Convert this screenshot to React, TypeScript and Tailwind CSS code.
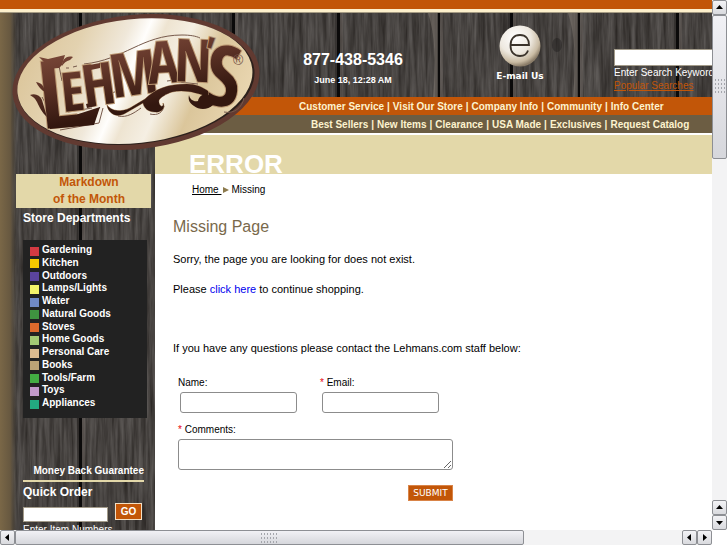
import { type ReactNode } from "react";

const departments = [
  { name: "Gardening", color: "bg-[#d43a42]" },
  { name: "Kitchen", color: "bg-[#f6c800]" },
  { name: "Outdoors", color: "bg-[#5b449c]" },
  { name: "Lamps/Lights", color: "bg-[#f4f36a]" },
  { name: "Water", color: "bg-[#7089c6]" },
  { name: "Natural Goods", color: "bg-[#3f9440]" },
  { name: "Stoves", color: "bg-[#dc6a2c]" },
  { name: "Home Goods", color: "bg-[#a3c974]" },
  { name: "Personal Care", color: "bg-[#dcbc90]" },
  { name: "Books", color: "bg-[#bba376]" },
  { name: "Tools/Farm", color: "bg-[#43ad43]" },
  { name: "Toys", color: "bg-[#c29aca]" },
  { name: "Appliances", color: "bg-[#23a981]" },
];

const serviceLinks = ["Customer Service", "Visit Our Store", "Company Info", "Community", "Info Center"];
const shopLinks = ["Best Sellers", "New Items", "Clearance", "USA Made", "Exclusives", "Request Catalog"];

const plankGaps = [80, 233, 338, 438, 511, 578, 677, 830, 935, 1035];

function WoodBackground() {
  return (
    <svg className="absolute inset-0 h-full w-full" aria-hidden="true">
      <defs>
        <filter id="grain" x="0" y="0" width="100%" height="100%" colorInterpolationFilters="sRGB">
          <feTurbulence type="fractalNoise" baseFrequency="0.28 0.018" numOctaves="4" seed="7" />
          <feColorMatrix values="0.26 0 0 0 0.145  0.26 0 0 0 0.13  0.26 0 0 0 0.12  0 0 0 0 1" />
        </filter>
        <linearGradient id="edge" x1="0" x2="1" y1="0" y2="0">
          <stop offset="0" stopColor="#7a6747" />
          <stop offset="0.6" stopColor="#675840" />
          <stop offset="1" stopColor="#4a443a" stopOpacity="0" />
        </linearGradient>
      </defs>
      <rect width="100%" height="100%" fill="#45403c" />
      <rect width="100%" height="100%" filter="url(#grain)" />
      {plankGaps.map((x) => (
        <g key={x}>
          <rect x={x - 3} width="2" height="100%" fill="#292725" opacity="0.6" />
          <rect x={x - 1} width="3" height="100%" fill="#0b0a0a" />
          <rect x={x + 2} width="3" height="100%" fill="#77716b" opacity="0.35" />
        </g>
      ))}
      <path d="M428 13q10 30 5 84h5V13z" fill="#847c74" opacity="0.5" />
      <path d="M568 13q10 30 5 84h5V13z" fill="#847c74" opacity="0.5" />
      <ellipse cx="557" cy="45" rx="5" ry="7" fill="#1c1a18" opacity="0.4" />
      <rect width="17" height="100%" fill="url(#edge)" />
    </svg>
  );
}

function Logo() {
  return (
    <svg viewBox="0 0 250 138" className="h-[138px] w-[250px]" role="img" aria-label="Lehman's">
      <defs>
        <linearGradient id="plate" x1="0" y1="0.35" x2="1" y2="0.65">
          <stop offset="0" stopColor="#dcc69b" />
          <stop offset="0.2" stopColor="#e3d2b0" />
          <stop offset="0.38" stopColor="#f0e8da" />
          <stop offset="0.46" stopColor="#fffefc" />
          <stop offset="0.53" stopColor="#eee4d1" />
          <stop offset="0.64" stopColor="#f5efe3" />
          <stop offset="0.78" stopColor="#dbc69b" />
          <stop offset="1" stopColor="#ead7b2" />
        </linearGradient>
        <linearGradient id="ink" gradientUnits="userSpaceOnUse" x1="0" y1="25" x2="20" y2="118">
          <stop offset="0" stopColor="#8b5645" />
          <stop offset="0.5" stopColor="#65382b" />
          <stop offset="1" stopColor="#33170f" />
        </linearGradient>
      </defs>
      <g transform="rotate(-6 124 69)">
        <ellipse cx="124" cy="69" rx="124" ry="67" fill="#613a31" />
        <ellipse cx="124" cy="69" rx="119" ry="62" fill="#2d211c" />
        <ellipse cx="123" cy="68" rx="118" ry="62" fill="url(#plate)" />
      </g>
      {/* engraved lines around the lettering */}
      <g fill="none" stroke="#76594b" strokeWidth="1">
        <path d="M72 51C112 47 130 22 170 22c8 0 14 1 18 3" />
        <path d="M54 55h3M61 54l4-1M56 99l24-4M50 104l34-5 4-5M48 117l39-7 4-15" />
        <path d="M100 80l10-4M106 103c9 2 16-3 23-8M138 101c8 2 13-2 14-8" />
        <path d="M155 68l8-1M166 69l20 2M212 99c10 2 18-4 20-14" />
        <path d="M30 84c5 8 6 16 7 24M46 48l4 20" />
      </g>
      <g
        fill="url(#ink)"
        stroke="#bd9a74"
        strokeWidth="2"
        paintOrder="stroke"
        className="font-['Open_Sans_Condensed','Roboto_Condensed',sans-serif] font-bold"
      >
        <text>
          <tspan x="30" y="116" fontSize="94" rotate="-6">L</tspan>
          <tspan x="51" y="99" fontSize="54" rotate="-6">E</tspan>
          <tspan x="73" y="94" fontSize="58" rotate="-8">H</tspan>
          <tspan x="101" y="85" fontSize="60" rotate="-8">M</tspan>
          <tspan x="137" y="71" fontSize="58" rotate="-4">A</tspan>
          <tspan x="162" y="68" fontSize="59" rotate="2">N</tspan>
          <tspan x="187" y="52" fontSize="42" rotate="16">'</tspan>
          <tspan x="191" y="91" fontSize="84" rotate="6">S</tspan>
        </text>
      </g>
      {/* serifs and swash */}
      <g fill="url(#ink)">
        <path d="M27 44l9 2 17-4-3 10-3 3-12 1-3-7zM36 107l3-2 12 1 37-12-6 18-44 4z" />
        <path d="M72 53l16-3v5l-14 3zM74 91l9-2 1 4-9 2z" />
        <path d="M95 92c5 7 15 7 23 3l15-9c10-10 23-15 42-15 9 0 15 3 21 7v6c-10-4-24-8-36-5-6 2-11 5-13 8-1 6 5 9 4 3 3 5-2 10-8 9-7 0-11-4-12-9l-19 11c-8 4-16-1-17-9z" stroke="#bd9a74" strokeWidth="1" paintOrder="stroke" />
        <path d="M177 82c1 5 5 7 9 6 1-6 8-9 12-5l3 9c-5 5-14 5-19 1-5-3-6-7-5-11z" />
        <path d="M18 82c5-2 10 0 12 5l5 17c-5-4-8-11-10-15-2-4-4-5-7-7zM24 69c6 1 8 4 9 10-4-2-7-6-9-10zM50 53c0-6 4-11 11-9l-3 3c-4 1-6 3-8 6z" />
      </g>
      <text x="221" y="52" fontSize="14" fill="#765348" className="font-['Liberation_Sans',sans-serif]">®</text>
    </svg>
  );
}

function EmailOrb() {
  return (
    <svg viewBox="0 0 42 42" className="h-[42px] w-[42px]" aria-hidden="true">
      <defs>
        <radialGradient id="orb" cx="0.38" cy="0.3" r="0.7">
          <stop offset="0" stopColor="#ffffff" />
          <stop offset="0.55" stopColor="#eee9e0" />
          <stop offset="0.85" stopColor="#c9bba3" />
          <stop offset="1" stopColor="#8b7d69" />
        </radialGradient>
      </defs>
      <circle cx="21" cy="21" r="20.500" fill="url(#orb)" />
      <path d="M12 20h18c0-6-3-10-9-10s-9.500 4-9.500 10.500S15 31 21 31c4 0 7-2 8-5.500" fill="none" stroke="#3b342c" strokeWidth="1.800" />
    </svg>
  );
}

function LinkBar({ links, className }: { links: string[]; className: string }) {
  return (
    <nav className={`flex h-[18px] items-center gap-[3px] whitespace-nowrap text-[10px] font-bold text-[#fdf3cf] ${className}`}>
      {links.map((l, i) => (
        <span key={l} className="flex gap-[3px]">
          {i > 0 ? <span>|</span> : null}
          <a href="#">{l}</a>
        </span>
      ))}
    </nav>
  );
}

const arrows = {
  up: "M4 9h7L7.500 5z",
  down: "M4 6h7l-3.500 4z",
  left: "M9 4v7L5 7.500z",
  right: "M6 4v7l4-3.500z",
};

function ArrowButton({ dir }: { dir: keyof typeof arrows }) {
  return (
    <button type="button" aria-label={`Scroll ${dir}`} className="h-[15px] w-[15px] shrink-0 rounded-xs border border-[#8d8f94] bg-linear-to-b from-[#f3f3f6] to-[#d9dade]">
      <svg viewBox="1 1 13 13" className="h-full w-full"><path d={arrows[dir]} fill="#000" /></svg>
    </button>
  );
}

function Grip({ children }: { children?: ReactNode }) {
  return (
    <div className="flex h-full w-full items-center justify-center rounded-xs border border-[#8d8f94] bg-linear-to-b from-[#f1f1f5] to-[#d6d7dc]">
      {children}
    </div>
  );
}

function GripDots({ className }: { className: string }) {
  return (
    <svg className={className} aria-hidden="true">
      <pattern id="dots" width="3" height="4" patternUnits="userSpaceOnUse"><rect width="1" height="2" fill="#a4a6ac" /></pattern>
      <rect width="100%" height="100%" fill="url(#dots)" />
    </svg>
  );
}

function Sidebar() {
  return (
    <aside className="relative w-[155px] shrink-0 pt-[161px] pl-4 font-bold text-white">
      <a href="#" className="mr-1 block bg-[#e3d8a9] pl-[11px] text-center text-[12px] leading-[17px] text-[#c25608]">
        Markdown<br />of the Month
      </a>
      <div className="mr-2 ml-[7px]">
        <h2 className="pt-[2px] text-[12px] leading-4">Store Departments</h2>
        <ul className="mt-[14px] flex h-[178px] flex-col justify-between bg-[#222] pt-1 pr-2 pb-[9px] pl-[7px] text-[10px] leading-3">
          {departments.map((d) => (
            <li key={d.name} className="flex h-3 items-center gap-[3px]">
              <span className={`mt-[2px] h-[9px] w-[9px] ${d.color}`} />
              <a href="#">{d.name}</a>
            </li>
          ))}
        </ul>
        <div className="mr-[3px] pt-[46px]">
          <a href="#" className="block border-b-2 border-[#e3d8a9] pb-[2px] text-right text-[10px] leading-[14px] whitespace-nowrap">Money Back Guarantee</a>
          <h2 className="mt-[2px] text-[12px] leading-4">Quick Order</h2>
          <div className="mt-[3px] flex items-start justify-between">
            <input id="items" className="mt-1 h-[15px] w-[85px] border border-[#a39b8a] bg-white px-1 text-[10px] text-black" />
            <button type="button" className="mr-[2px] h-[17px] w-[27px] border border-[#f3dfc3] bg-[#c25608] text-[10px] leading-[14px]">GO</button>
          </div>
          <label htmlFor="items" className="block text-[10px] font-normal whitespace-nowrap">Enter Item Numbers</label>
        </div>
      </div>
    </aside>
  );
}

function Header() {
  return (
    <header>
      <div className="flex h-[84px] pl-[146px] whitespace-nowrap text-white">
        <div className="w-[104px] shrink-0 pt-[37px] text-center font-bold">
          <p className="text-[16px] leading-5">877-438-5346</p>
          <p className="pt-1 text-[9px] leading-3">June 18, 12:28 AM</p>
        </div>
        <a href="#" className="ml-[88px] flex w-[54px] shrink-0 flex-col items-center pt-3 font-['DejaVu_Sans',sans-serif] text-[9px] leading-3 font-bold">
          <EmailOrb />
          <span className="mt-[3px]">E-mail Us</span>
        </a>
        <div className="ml-[67px] min-w-0 flex-1 pt-[36px] text-[10px] leading-[13px]">
          <input id="search" className="block h-[17px] w-[140px] border border-[#a39b8a] bg-white px-1 text-black" />
          <label htmlFor="search" className="block">Enter Search Keywords</label>
          <a href="#" className="text-[#c25608] underline">Popular Searches</a>
        </div>
      </div>
      <LinkBar links={serviceLinks} className="bg-[#c25608] pl-36" />
      <LinkBar links={shopLinks} className="bg-[#6c5d43] pl-[156px]" />
    </header>
  );
}

const field = "block rounded-[3px] border border-[#8c8c8c] bg-white px-1 outline-none";

function ContactForm() {
  return (
    <form className="ml-[5px] w-[275px] pt-5 text-[10px] leading-[14px]" onSubmit={(e) => e.preventDefault()}>
      <div className="flex gap-[25px] pl-[2px]">
        <div>
          <label htmlFor="name" className="-ml-[2px] block">Name:</label>
          <input id="name" className={`${field} mt-[2px] h-[21px] w-[117px]`} />
        </div>
        <div>
          <label htmlFor="email" className="-ml-[2px] block"><span className="text-red-600">*</span> Email:</label>
          <input id="email" className={`${field} mt-[2px] h-[21px] w-[117px]`} />
        </div>
      </div>
      <label htmlFor="comments" className="mt-[10px] block"><span className="text-red-600">*</span> Comments:</label>
      <textarea id="comments" className={`${field} mt-[2px] h-[31px] w-full resize`} />
      <button type="submit" className="mt-[15px] ml-auto block h-4 w-[45px] border border-[#d98448] bg-[#c25608] font-['DejaVu_Sans',sans-serif] text-[9px] leading-[13px] text-white">
        SUBMIT
      </button>
    </form>
  );
}

export default function App() {
  return (
    <div className="flex h-screen flex-col bg-white font-['Liberation_Sans',Arial,sans-serif] text-[11px] text-black">
      <div className="flex min-h-0 flex-1">
        <div className="relative flex min-w-0 flex-1 flex-col overflow-hidden">
          <WoodBackground />
          <div className="relative h-[9px] shrink-0 bg-[#c25608]" />
          <div className="relative h-1 shrink-0 border-b border-[#a59b83] bg-[#fdf0cc]" />
          <div className="relative flex min-h-0 flex-1">
            <Sidebar />
            <div className="flex min-w-0 flex-1 flex-col">
              <Header />
              <main className="flex-1 bg-white pt-[2px]">
                <h1 className="h-[39px] overflow-hidden bg-[#e3d8a9] pt-[13px] pl-[34px] text-[26px] leading-[32px] font-bold text-white">ERROR</h1>
                <div className="flex items-center gap-[2px] pt-2 pl-[37px] text-[10px] leading-4">
                  <a href="#" className="underline">Home&nbsp;</a>
                  <svg viewBox="0 0 6 6" className="h-[6px] w-[6px]"><path d="M0 0l6 3-6 3z" fill="#8c7a4d" /></svg>
                  <span>Missing</span>
                </div>
                <div className="pl-[18px] leading-[15px]">
                  <h2 className="pt-[17px] text-[16px] leading-6 text-[#79694b]">Missing Page</h2>
                  <p className="pt-[13px]">Sorry, the page you are looking for does not exist.</p>
                  <p className="pt-[15px]">Please <a href="#" className="text-[#0000ee]">click here</a> to continue shopping.</p>
                  <p className="pt-[44px]">If you have any questions please contact the Lehmans.com staff below:</p>
                  <ContactForm />
                </div>
              </main>
            </div>
            <a href="#" className="absolute top-0 left-3"><Logo /></a>
          </div>
        </div>
        <div className="flex w-[15px] shrink-0 flex-col bg-[#f3f3f4]">
          <ArrowButton dir="up" />
          <div className="h-36"><Grip><GripDots className="h-4 w-[10px]" /></Grip></div>
          <div className="flex-1" />
          <ArrowButton dir="up" />
          <ArrowButton dir="down" />
        </div>
      </div>
      <div className="flex h-[15px] shrink-0 bg-[#f3f3f4]">
        <ArrowButton dir="left" />
        <div className="w-[70%]"><Grip><GripDots className="h-[10px] w-4" /></Grip></div>
        <div className="flex-1" />
        <ArrowButton dir="left" />
        <ArrowButton dir="right" />
        <div className="w-[15px] bg-white" />
      </div>
    </div>
  );
}
